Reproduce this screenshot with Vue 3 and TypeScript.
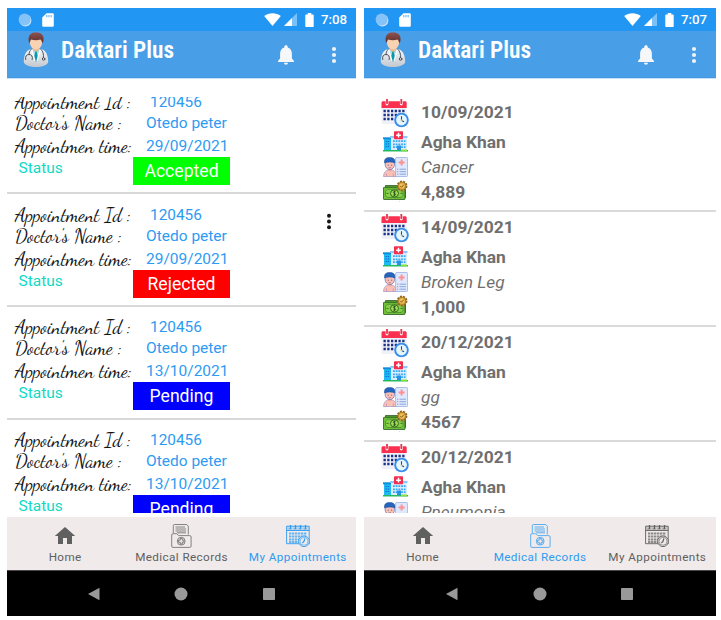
<script setup lang="ts">
interface Appointment {
  id: string
  doctor: string
  time: string
  status: 'Accepted' | 'Rejected' | 'Pending'
  menu?: boolean
}

interface MedicalRecord {
  date: string
  hospital: string
  illness: string
  cost: string
}

interface Phone {
  kind: 'appointments' | 'records'
  clock: string
  active: string
}

const phones: Phone[] = [
  { kind: 'appointments', clock: '7:08', active: 'My Appointments' },
  { kind: 'records', clock: '7:07', active: 'Medical Records' },
]

const appointments: Appointment[] = [
  { id: '120456', doctor: 'Otedo peter', time: '29/09/2021', status: 'Accepted' },
  { id: '120456', doctor: 'Otedo peter', time: '29/09/2021', status: 'Rejected', menu: true },
  { id: '120456', doctor: 'Otedo peter', time: '13/10/2021', status: 'Pending' },
  { id: '120456', doctor: 'Otedo peter', time: '13/10/2021', status: 'Pending' },
]

const records: MedicalRecord[] = [
  { date: '10/09/2021', hospital: 'Agha Khan', illness: 'Cancer', cost: '4,889' },
  { date: '14/09/2021', hospital: 'Agha Khan', illness: 'Broken Leg', cost: '1,000' },
  { date: '20/12/2021', hospital: 'Agha Khan', illness: 'gg', cost: '4567' },
  { date: '20/12/2021', hospital: 'Agha Khan', illness: 'Pneumonia', cost: '' },
]

const tabs = [
  { label: 'Home', icon: 'home' },
  { label: 'Medical Records', icon: 'folder' },
  { label: 'My Appointments', icon: 'planner' },
]
</script>

<template>
  <svg class="sprite" aria-hidden="true">
    <defs>
      <linearGradient id="coat" x1="0" y1="0" x2="0" y2="1">
        <stop offset="0" stop-color="#f4f6f8" />
        <stop offset="1" stop-color="#c3c8cf" />
      </linearGradient>
      <linearGradient id="hair" x1="0" y1="0" x2="0" y2="1">
        <stop offset="0" stop-color="#8d5450" />
        <stop offset="1" stop-color="#5c2b2b" />
      </linearGradient>
    </defs>

    <symbol id="doctor" viewBox="0 0 26 36">
      <path d="M.8 30c0-7 2.500-11.500 6-12.500h12.400c3.500 1 6 5.500 6 12.500-1.500 6.700-22.900 6.700-24.400 0z" fill="url(#coat)" />
      <path d="M8.800 17.500h8.400L13 29z" fill="#a9dce6" />
      <path d="M11.600 18.500h2.800l-.6 2 1.400 5.500-2.200 4-2.200-4 1.400-5.500z" fill="#0c98ab" />
      <path d="M9.500 13h7v4.500L13 20l-3.500-2.500z" fill="#eab891" />
      <ellipse cx="13" cy="9.800" rx="6.200" ry="7.800" fill="#f9d3b1" />
      <path d="M5.800 9.500C4.600 3.800 8 .4 12 .6c6-.8 9.600 2.600 8.300 8.900l-1.100 1.800c-.2-1.800-.8-2.900-1.700-3.700-3 .8-6.500.8-9.300 0-.8.8-1.200 2-1.300 3.500z" fill="url(#hair)" />
      <g fill="none" stroke="#3e4249" stroke-width=".9" stroke-linecap="round">
        <path d="M8.500 17.200C6.500 19 6 20.500 6 22.500m-3.300 5C2 24.500 3.400 22.500 6 22.500s4 2 3.200 5" />
        <path d="M17.600 17.200c2.600 2 3.200 5 2.800 8.500" />
        <circle cx="20.600" cy="27" r="1.300" fill="#dce2e7" />
      </g>
      <path d="M8.700 17.500l3.300 11.300M17.300 17.500L14 28.800" stroke="#fff" stroke-width="1.200" />
    </symbol>

    <symbol id="bell" viewBox="0 0 16 20">
      <path d="M8 .2c1 0 1.700.7 1.700 1.700v.6c2.700.8 4.200 3 4.200 6v5l2 2.300V17H.1v-1.200l2-2.300v-5c0-3 1.500-5.200 4.200-6v-.6C6.300.9 7 .2 8 .2zM6 17.700h4c0 1.200-.9 2-2 2s-2-.8-2-2z" fill="#f5f7f9" />
    </symbol>

    <symbol id="dots" viewBox="0 0 6 18">
      <circle cx="3" cy="3" r="2.100" /><circle cx="3" cy="9" r="2.100" /><circle cx="3" cy="15" r="2.100" />
    </symbol>

    <symbol id="sdcard" viewBox="0 0 12 14">
      <path d="M4.500.2h6c.8 0 1.300.5 1.300 1.200v11c0 .8-.5 1.300-1.300 1.300h-9c-.8 0-1.300-.5-1.300-1.300V4.500z" fill="#fff" />
      <path d="M4.800 2v2.200M7 2v2.200M9.200 2v2.200" stroke="#6db7f5" stroke-width="1.200" />
    </symbol>

    <symbol id="calendar" viewBox="0 0 28 29">
      <path d="M.5 8h25.200v15.500c0 1-.7 1.600-1.600 1.600H2.100c-1 0-1.600-.7-1.600-1.600z" fill="#eef1f8" />
      <path d="M.5 3.800c0-1 .6-1.600 1.600-1.600h22c1 0 1.600.6 1.600 1.600V9H.5z" fill="#fb2f4e" />
      <path d="M6 0v5M20.300 0v5" stroke="#fff" stroke-width="2.800" stroke-linecap="round" />
      <path d="M6 0v4.300M20.300 0v4.300" stroke="#e7344e" stroke-width="1.800" stroke-linecap="round" />
      <path d="M2.500 12h21M2.500 16h21M2.500 20h11" stroke="#1c2f86" stroke-width="2.300" stroke-dasharray="2.300 1.440" />
      <circle cx="20.500" cy="21" r="7.300" fill="#3b8ee8" />
      <circle cx="20.500" cy="21" r="5.400" fill="#e6f6ff" />
      <path d="M20.500 17.200V21.400l2.600 1.300" fill="none" stroke="#254b8c" stroke-width="1.100" />
      <circle cx="20.500" cy="21.300" r=".9" fill="#f8c62d" />
    </symbol>

    <symbol id="hospital" viewBox="0 0 25 21">
      <path d="M1 7h7v12H1z" fill="#20b9f1" />
      <path d="M0 6.300h8.500v2H0z" fill="#0d8ed8" />
      <path d="M8 5.500h16V19.500H8z" fill="#dcecff" />
      <path d="M7 5h17.500v2H7z" fill="#8ec6f6" />
      <path d="M2.500 10.500h3.800M2.500 13h3.800M2.500 15.500h3.800" stroke="#126ecb" stroke-width="1.200" stroke-dasharray="1.400 .8" />
      <path d="M10 10.200h12.500M10 13.300h12.500M10 16.200h12.500" stroke="#32a9f4" stroke-width="1.700" stroke-dasharray="1.800 .9" />
      <path d="M14 14.500h4V20h-4z" fill="#2791e4" />
      <path d="M0 19h25v1.500H0z" fill="#24ba62" />
      <path d="M18 18.500h6v1.700h-6z" fill="#8be03e" />
      <rect x="11" y=".2" width="9" height="8" rx=".8" fill="#f32e4f" />
      <path d="M15.500 1.800v4.800M13.100 4.200h4.800" stroke="#fff" stroke-width="1.500" />
    </symbol>

    <symbol id="patient" viewBox="0 0 25 20">
      <path d="M.5 19.500C.8 15 2.800 13.300 5.500 12.900h3c2.700.4 4.500 2.200 4.800 6.600z" fill="#fbc0b6" stroke="#8378b5" stroke-width=".5" />
      <path d="M5.500 10.500h3.500v3.200c-1 1-2.500 1-3.500 0z" fill="#f8a99f" />
      <ellipse cx="6.800" cy="7.400" rx="4.700" ry="5.200" fill="#fbc1b7" stroke="#4b59ae" stroke-width=".6" />
      <path d="M1.500 6C1 2.200 3 .7 6.200.6c4-.2 6.200 1.400 5.900 5.400-3.300-1.300-7.300-1.300-10.600 0z" fill="#2465bd" stroke="#21479b" stroke-width=".5" />
      <path d="M4.800 8.200h.8M8.300 8.200h.8" stroke="#304181" />
      <path d="M5.700 10.500q1.100.8 2.200 0" fill="none" stroke="#8a4667" stroke-width=".6" />
      <path d="M3.600 16.500v3M10.300 16.500v3" stroke="#a178a6" stroke-width=".5" />
      <rect x="12.600" y=".5" width="12" height="19" rx="1" fill="#dce9ff" stroke="#8ca5df" stroke-width=".7" />
      <path d="M18.600 2.400v6M15.600 5.400h6" stroke="#ff9090" stroke-width="2" />
      <path d="M16.500 12.200h6.500M16.500 14.700h6.500M16.500 17.200h6.500" stroke="#7892d2" stroke-width=".8" />
      <path d="M14 12.200h1.300M14 14.700h1.300M14 17.200h1.300" stroke="#f0787d" />
    </symbol>

    <symbol id="money" viewBox="0 0 25 22">
      <path d="M2.500 5.500h20v12h-20z" fill="#55a02b" stroke="#234f1d" stroke-width=".7" />
      <rect x=".5" y="7.300" width="21.500" height="12.200" rx=".6" fill="#6fbf38" stroke="#28591f" stroke-width=".8" />
      <path d="M4.500 9.300h13.500l2 2v4.200l-2 2H4.500l-2-2v-4.200z" fill="#86cf48" stroke="#39782a" stroke-width=".6" />
      <ellipse cx="11.500" cy="13.400" rx="4" ry="3.600" fill="#a2dc56" stroke="#285b1c" stroke-width=".9" />
      <path d="M12.700 11.800c-1.300-.9-2.800-.1-2.300.8.500.9 2 .7 2.200 1.600.2 1.200-1.500 1.300-2.500.6M11.500 10.700v5.400" fill="none" stroke="#20481b" stroke-width=".8" />
      <path d="M3.500 13.400h2M17.500 13.400h2" stroke="#39782a" />
      <circle cx="19" cy="6" r="4.500" fill="#d79b2e" stroke="#8d6925" stroke-width="1.900" stroke-dasharray="2 1.100" />
      <circle cx="19" cy="6" r="3.500" fill="#eebd55" stroke="#a2731e" stroke-width=".7" />
      <path d="M17.300 6l1.200 1.300 2.300-2.600" fill="none" stroke="#7b5520" stroke-width=".9" />
      <path d="M16.500 21v.8" stroke="#8fd6f6" stroke-width=".7" />
    </symbol>

    <symbol id="home" viewBox="0 0 24 24">
      <path d="M10 20v-6h4v6h5v-8h3.200L12 2.900 1.800 12H5v8z" fill="currentColor" />
    </symbol>

    <symbol id="folder" viewBox="0 0 24 24">
      <g fill="none" stroke="currentColor" stroke-width=".75">
        <path d="M4.300 9V1.700q0-1.200 1.200-1.200h12.200l1.600 1.700v8.300" />
        <path d="M6.500 3h9.500M6.500 5h10.500M6.500 7h10.500M8 8.800h9" />
        <path d="M2.700 22.200V11q0-1.300 1.300-1.300h3.700l2 1.900h11q1.400 0 1.400 1.400v9q0 1.400-1.400 1.400H4q-1.300 0-1.300-1.200z" />
        <circle cx="12.200" cy="17.200" r="3.900" />
        <path d="M11.200 14.400h2v1.800H15v2h-1.800V20h-2v-1.800H9.400v-2h1.800z" />
      </g>
    </symbol>

    <symbol id="planner" viewBox="0 0 24 24">
      <path d="M.6 2.200h22.600v4.300H.6z" fill="currentColor" opacity=".25" />
      <g fill="none" stroke="currentColor" stroke-width=".9">
        <path d="M.6 2.200h22.600v17.500H.6zM.6 6.500h22.600" />
        <path d="M4.500.9v4M9.500.9v4M14.500.9v4M19.500.9v4" stroke-width="1.300" />
        <path d="M2.500 4.900h3M7.500 4.900h3M12.500 4.900h3M17.500 4.900h3" stroke-width=".7" />
        <path d="M3 9.500h18M3 12.500h18M3 15.500h11M3 18h10" stroke-width="2.100" stroke-dasharray="2.400 .6" opacity=".7" />
        <circle cx="18" cy="17.300" r="5.300" fill="#f0eaea" />
        <circle cx="18" cy="17.300" r="4" stroke-width=".6" />
        <path d="M18.800 14.500L18 17.500l-1.700 1.500" stroke-width="1.200" />
      </g>
    </symbol>
  </svg>

  <main class="page">
    <section v-for="phone in phones" :key="phone.kind" class="phone" :class="phone.kind">
      <div class="statusbar">
        <svg class="sync" viewBox="0 0 14 14">
          <circle cx="7.400" cy="7.400" r="6" fill="#c6e4fc" />
          <circle cx="6.600" cy="6.600" r="6" fill="#84c2f7" />
        </svg>
        <svg class="sd"><use href="#sdcard" /></svg>
        <span class="grow"></span>
        <svg class="wifi" viewBox="0 0 17 13"><path d="M.2 3C5-.7 12-.7 16.800 3L8.500 12.900z" fill="#fff" /></svg>
        <svg class="signal" viewBox="0 0 13 13">
          <path d="M13 0v13H0z" fill="#7cc0f8" /><path d="M8 5v8H0z" fill="#fff" />
        </svg>
        <svg class="battery" viewBox="0 0 9 14">
          <path d="M2.700 0h3.600v1.500H8q.7 0 .7.700v11q0 .8-.7.800H1q-.7 0-.7-.8v-11q0-.7.700-.7h1.700z" fill="#fff" />
        </svg>
        <span class="clock">{{ phone.clock }}</span>
      </div>

      <header class="toolbar">
        <svg class="logo"><use href="#doctor" /></svg>
        <svg class="title">
          <text x="0" y="22" textLength="113" lengthAdjust="spacingAndGlyphs">Daktari Plus</text>
        </svg>
        <span class="grow"></span>
        <svg class="bell"><use href="#bell" /></svg>
        <svg class="more"><use href="#dots" /></svg>
      </header>

      <div class="content">
        <div v-if="phone.kind === 'appointments'" class="list">
          <article v-for="(item, i) in appointments" :key="i" class="appointment">
            <div class="line">
              <svg class="label"><text x="1" y="15.500" textLength="116" lengthAdjust="spacingAndGlyphs">Appointment Id :</text></svg>
              <span class="value id">{{ item.id }}</span>
            </div>
            <div class="line">
              <svg class="label"><text x="1" y="15.500" textLength="107" lengthAdjust="spacingAndGlyphs">Doctor's Name :</text></svg>
              <span class="value">{{ item.doctor }}</span>
            </div>
            <div class="line time">
              <svg class="label"><text x="1" y="15.500" textLength="117" lengthAdjust="spacingAndGlyphs">Appointmen time:</text></svg>
              <span class="value">{{ item.time }}</span>
            </div>
            <div class="state">
              <span class="caption">Status</span>
              <span class="tag" :class="item.status.toLowerCase()">{{ item.status }}</span>
            </div>
            <svg v-if="item.menu" class="row-menu"><use href="#dots" /></svg>
          </article>
        </div>

        <div v-else class="list">
          <article v-for="(item, i) in records" :key="i" class="record">
            <div class="entry"><span class="pic"><svg class="i-calendar"><use href="#calendar" /></svg></span><b>{{ item.date }}</b></div>
            <div class="entry"><span class="pic"><svg class="i-hospital"><use href="#hospital" /></svg></span><b>{{ item.hospital }}</b></div>
            <div class="entry short"><span class="pic"><svg class="i-patient"><use href="#patient" /></svg></span><i>{{ item.illness }}</i></div>
            <div v-if="item.cost" class="entry"><span class="pic"><svg class="i-money"><use href="#money" /></svg></span><b>{{ item.cost }}</b></div>
          </article>
        </div>
      </div>

      <nav class="tabs">
        <div v-for="tab in tabs" :key="tab.label" class="tab" :class="{ active: tab.label === phone.active }">
          <svg><use :href="'#' + tab.icon" /></svg>
          <span>{{ tab.label }}</span>
        </div>
      </nav>

      <footer class="system">
        <svg viewBox="0 0 14 14"><path d="M12.500.8v12.400L1 7z" fill="#999" /></svg>
        <svg viewBox="0 0 14 14"><circle cx="7" cy="7" r="6.500" fill="#999" /></svg>
        <svg viewBox="0 0 14 14"><rect x="1" y="1" width="12" height="12" rx=".8" fill="#999" /></svg>
      </footer>
    </section>
  </main>
</template>

<style>
body {
  background: #fff;
}
</style>

<style scoped>
.sprite {
  position: absolute;
  width: 0;
  height: 0;
}
.page {
  box-sizing: border-box;
  width: 721px;
  height: 620px;
  padding: 8px 5px 4px 7px;
  display: grid;
  grid-template-columns: 349px 352px;
  gap: 8px;
  overflow: hidden;
  font-family: Roboto, "Liberation Sans", sans-serif;
}
.phone {
  display: flex;
  flex-direction: column;
  height: 608px;
  min-width: 0;
}
svg {
  display: block;
  flex: none;
}
.grow {
  flex: 1;
}
.statusbar {
  display: flex;
  align-items: center;
  height: 23px;
  padding: 0 8px 0 10.500px;
  background: #2196f3;
  box-sizing: border-box;
}
.sync { width: 14px; height: 14px; }
.sd { width: 12px; height: 14px; margin-left: 10.500px; }
.wifi { width: 17px; height: 13px; }
.signal { width: 13px; height: 13px; margin-left: 3px; }
.battery { width: 9px; height: 14px; margin-left: 8px; }
.clock {
  width: 27px;
  margin-left: 7px;
  color: #fff;
  font-size: 13.300px;
  font-weight: 500;
  white-space: nowrap;
}
.toolbar {
  display: flex;
  box-sizing: border-box;
  height: 47px;
  padding: 0 19px 0 16px;
  background: #489fe8;
  border-bottom: 1px solid #4398e4;
  box-shadow: 0 1px 0 #c8e3f9;
  flex: none;
}
.logo { width: 26px; height: 36px; margin-top: 1px; }
.title {
  width: 120px;
  height: 30px;
  margin: 5px 0 0 12px;
  overflow: visible;
}
.title text {
  font-family: "Roboto Condensed", Roboto, sans-serif;
  font-size: 23.500px;
  font-stretch: condensed;
  font-weight: 600;
  fill: #fff;
}
.bell { width: 16px; height: 20px; margin-top: 14px; }
.more { width: 6px; height: 18px; margin: 14.500px 0 0 37.500px; fill: #f0f2f4; }

.content {
  height: 416px;
  margin: 19px 0 4px;
  overflow: hidden;
  flex: none;
}
.appointments .list {
  margin-top: -15.500px;
}
.appointment {
  position: relative;
  box-sizing: border-box;
  height: 112.700px;
  padding: 10.500px 0 0 7px;
  border-bottom: 2px solid #d8d8d8;
}
.line {
  display: flex;
  height: 21px;
  line-height: 21px;
}
.line.time {
  margin-top: 2px;
}
.label {
  width: 132px;
  height: 21px;
  overflow: visible;
}
.label text {
  font-family: "Dancing Script", cursive;
  font-size: 18.500px;
  fill: #111;
}
.value {
  color: #2e9bf2;
  font-size: 15.500px;
  white-space: nowrap;
}
.value.id {
  padding-left: 4px;
  font-size: 15.400px;
}
.state {
  display: flex;
  height: 28px;
}
.caption {
  box-sizing: border-box;
  width: 119px;
  padding-left: 4.500px;
  color: #10d9c4;
  font-size: 15.500px;
  line-height: 22px;
}
.tag {
  width: 97px;
  height: 28px;
  color: #fff;
  font-size: 17.600px;
  line-height: 29px;
  text-align: center;
}
.accepted { background: #00ff00; }
.rejected { background: #ff0000; }
.pending { background: #0000ff; }
.row-menu {
  position: absolute;
  right: 24.500px;
  top: 19px;
  width: 6px;
  height: 17px;
  fill: #151515;
}

.record {
  box-sizing: border-box;
  height: 115px;
  padding-left: 17px;
  border-bottom: 2px solid #dadada;
}
.entry {
  display: flex;
  align-items: center;
  height: 30px;
  color: #6f6f6f;
  font-size: 17.400px;
}
.entry.short {
  height: 20px;
}
.pic {
  display: flex;
  width: 40px;
  flex: none;
}
.i-calendar { width: 28px; height: 29px; margin-top: 2px; }
.i-hospital { width: 25px; height: 21px; margin: -2px 0 0 2px; }
.i-patient { width: 25px; height: 20px; margin: 0 0 0 2px; }
.i-money { width: 25px; height: 22px; margin: -3px 0 0 2px; }
.entry i {
  font-size: 17.300px;
}

.tabs {
  display: grid;
  grid-template-columns: repeat(3, 1fr);
  height: 53px;
  background: #f0eaea;
  flex: none;
}
.tab {
  display: flex;
  flex-direction: column;
  align-items: center;
  padding-top: 7px;
  color: #606060;
  font-size: 11.700px;
  letter-spacing: 0.400px;
  line-height: 16px;
  white-space: nowrap;
}
.tab svg {
  width: 24px;
  height: 24px;
}
.tab span {
  margin-top: 1px;
}
.tab.active {
  color: #2e9bf2;
}
.system {
  display: flex;
  align-items: center;
  justify-content: center;
  gap: 73.500px;
  height: 46px;
  box-sizing: border-box;
  padding-right: 1px;
  border-top: 1px solid #4a4848;
  background: #000;
  flex: none;
}
.system svg {
  width: 14px;
  height: 14px;
}
</style>
